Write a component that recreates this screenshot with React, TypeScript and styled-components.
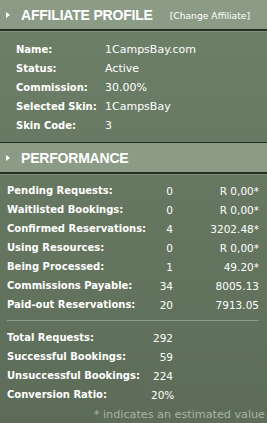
import React from "react";
import styled, { createGlobalStyle } from "styled-components";

const GlobalStyle = createGlobalStyle`
  html, body {
    margin: 0;
    padding: 0;
    background: #5d6d59;
  }
`;

const Panel = styled.div`
  width: 267px;
  height: 423px;
  overflow: hidden;
  background: linear-gradient(#6f8069, #5c6c58);
  font-family: "DejaVu Sans", Verdana, sans-serif;
  color: #ffffff;
`;

const Header = styled.div<{ $top?: boolean }>`
  height: 29px;
  display: flex;
  align-items: center;
  padding-left: 6px;
  background: #8b9b86;
  border-top: ${(p) => (p.$top ? "1px solid #253024" : "none")};
  border-bottom: 2px solid #253024;
  box-shadow: 0 1px 0 #7f8f7a;
`;

const Arrow = styled.span`
  width: 0;
  height: 0;
  border-top: 3px solid transparent;
  border-bottom: 3px solid transparent;
  border-left: 4px solid #ffffff;
  margin-right: 11px;
  margin-top: 1px;
`;

const Title = styled.h2`
  margin: 0;
  font-family: "Liberation Sans", Arial, sans-serif;
  font-weight: bold;
  font-size: 14px;
  color: #ffffff;
  letter-spacing: -0.2px;
`;

const ChangeLink = styled.a`
  margin-left: 17px;
  margin-top: 2px;
  font-size: 9.2px;
  color: #ffffff;
  text-decoration: none;
`;

const ProfileBody = styled.div`
  padding: 9px 0 7px 16px;
`;

const ProfileRow = styled.div`
  display: grid;
  grid-template-columns: 89px auto;
  height: 19px;
  align-items: center;
`;

const Label = styled.span`
  font-weight: bold;
  font-size: 10px;
  white-space: nowrap;
`;

const Value = styled.span`
  font-size: 11px;
  white-space: nowrap;
`;

const PerfBody = styled.div`
  padding: 7px 8px 0 7px;
`;

const StatRow = styled.div`
  display: grid;
  grid-template-columns: 144px 22px 86px;
  height: 19px;
  align-items: center;
`;

const Num = styled.span`
  font-size: 10.5px;
  text-align: right;
  white-space: nowrap;
`;

const Divider = styled.div`
  height: 1px;
  background: #8c9a89;
  margin: 6px 0 7px 0;
`;

const Note = styled.div`
  text-align: right;
  font-size: 11.2px;
  color: #a9b4a6;
  margin-right: -6px;
  margin-top: 4px;
`;

const profile = [
  ["Name:", "1CampsBay.com"],
  ["Status:", "Active"],
  ["Commission:", "30.00%"],
  ["Selected Skin:", "1CampsBay"],
  ["Skin Code:", "3"],
];

const stats = [
  ["Pending Requests:", "0", "R 0,00*"],
  ["Waitlisted Bookings:", "0", "R 0,00*"],
  ["Confirmed Reservations:", "4", "3202.48*"],
  ["Using Resources:", "0", "R 0,00*"],
  ["Being Processed:", "1", "49.20*"],
  ["Commissions Payable:", "34", "8005.13"],
  ["Paid-out Reservations:", "20", "7913.05"],
];

const totals = [
  ["Total Requests:", "292"],
  ["Successful Bookings:", "59"],
  ["Unsuccessful Bookings:", "224"],
  ["Conversion Ratio:", "20%"],
];

export default function App() {
  return (
    <>
      <GlobalStyle />
      <Panel>
        <Header>
          <Arrow />
          <Title>AFFILIATE PROFILE</Title>
          <ChangeLink href="#">[Change Affiliate]</ChangeLink>
        </Header>
        <ProfileBody>
          {profile.map(([l, v]) => (
            <ProfileRow key={l}>
              <Label>{l}</Label>
              <Value>{v}</Value>
            </ProfileRow>
          ))}
        </ProfileBody>
        <Header $top>
          <Arrow />
          <Title>PERFORMANCE</Title>
        </Header>
        <PerfBody>
          {stats.map(([l, c, a]) => (
            <StatRow key={l}>
              <Label>{l}</Label>
              <Num>{c}</Num>
              <Num>{a}</Num>
            </StatRow>
          ))}
          <Divider />
          {totals.map(([l, c]) => (
            <StatRow key={l}>
              <Label>{l}</Label>
              <Num>{c}</Num>
              <span />
            </StatRow>
          ))}
          <Note>* indicates an estimated value</Note>
        </PerfBody>
      </Panel>
    </>
  );
}
